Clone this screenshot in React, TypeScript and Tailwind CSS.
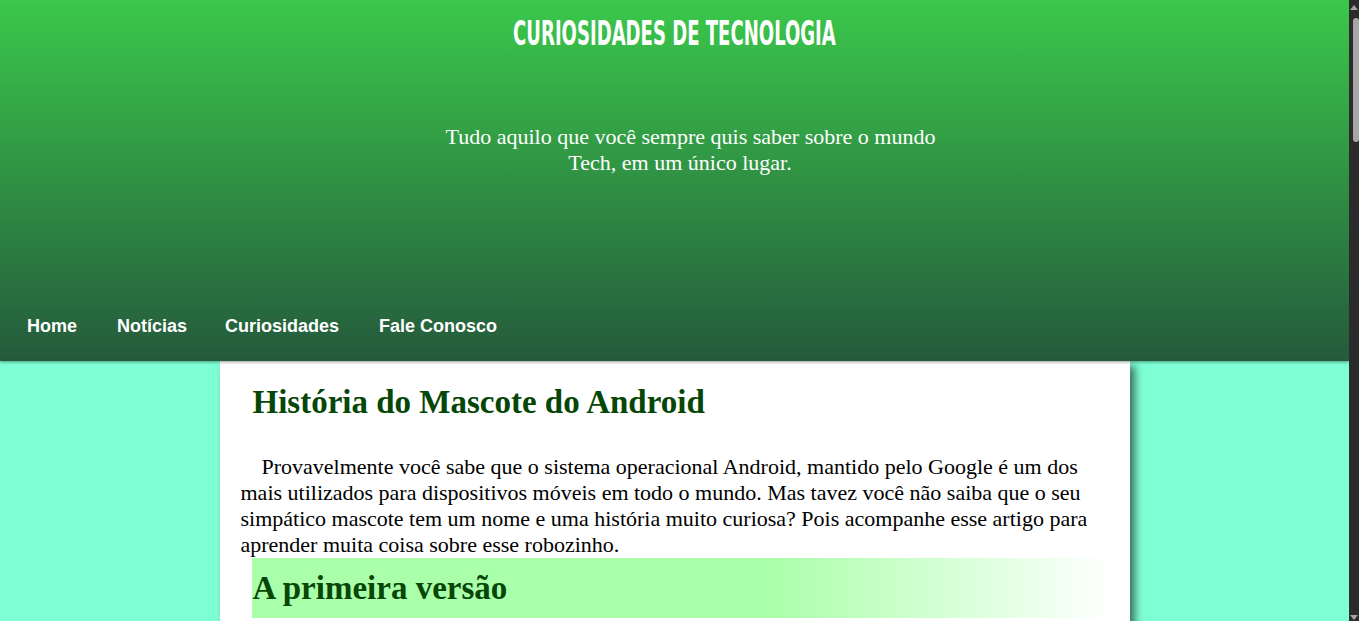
import React from "react";

function FakeScrollbar() {
  return (
    <div className="flex h-screen w-[10px] shrink-0 flex-col items-center bg-[#2b2b2b]">
      <div className="mt-[5px] h-0 w-0 border-x-[4px] border-b-[5px] border-x-transparent border-b-[#a3a3a3]" />
      <div className="mt-[8px] ml-[4px] h-[124px] w-[6px] rounded-[3px] bg-[#a6a6a6]" />
      <div className="mt-auto mb-[1px] h-0 w-0 border-x-[4px] border-t-[5px] border-x-transparent border-t-[#a3a3a3]" />
    </div>
  );
}

export default function App() {
  return (
    <div className="flex h-screen overflow-hidden bg-[#7fffd4]">
      <div className="h-screen min-w-0 flex-1 overflow-hidden">
        <header className="relative z-10 flex h-[361px] flex-col bg-[linear-gradient(to_bottom,#3bc84b,#245a3c)] shadow-[0_1px_3px_rgba(0,0,0,0.4)]">
          <h1 className="mt-[13px] text-center leading-[40px]">
            <span className="inline-block origin-center scale-x-[0.59] font-['DejaVu_Sans_Condensed','DejaVu_Sans',sans-serif] text-[34px] font-bold uppercase text-white [font-stretch:condensed]">
              Curiosidades de Tecnologia
            </span>
          </h1>
          <div className="mt-[65px] pl-[11px]">
            <p className="mx-auto max-w-[530px] text-center font-['Liberation_Serif',serif] text-[22px] leading-[26px] text-white indent-[21px]">
              Tudo aquilo que você sempre quis saber sobre o mundo Tech, em um único lugar.
            </p>
          </div>
          <nav className="mt-auto flex h-[70px] items-center pl-[27px] font-['Liberation_Sans',Arial,sans-serif] text-[18px] font-bold text-white">
            <a className="mr-[40px]">Home</a>
            <a className="mr-[38px]">Notícias</a>
            <a className="mr-[40px]">Curiosidades</a>
            <a>Fale Conosco</a>
          </nav>
        </header>
        <main className="mx-auto w-[910px] bg-white pb-10 pl-[21px] pr-[16px] pt-[23px] font-['Liberation_Serif',serif] shadow-[5px_5px_8px_rgba(0,0,0,0.55)]">
          <h2 className="ml-[12px] text-[33px] font-bold leading-[36px] text-[#064606]">
            História do Mascote do Android
          </h2>
          <p className="mt-[34px] text-[22px] leading-[26px] text-black indent-[21px]">
            Provavelmente você sabe que o sistema operacional Android, mantido pelo Google é um dos mais utilizados para dispositivos móveis em todo o mundo. Mas tavez você não saiba que o seu simpático mascote tem um nome e uma história muito curiosa? Pois acompanhe esse artigo para aprender muita coisa sobre esse robozinho.
          </p>
          <h3 className="ml-[11px] bg-[linear-gradient(to_right,#aaffaa_60%,#ffffff)] pb-[11px] pl-px pt-[12px] text-[33px] font-bold leading-[37px] text-[#064606]">
            A primeira versão
          </h3>
          <p className="mt-[16px] text-[22px] leading-[26px] text-black indent-[21px]">
            O robozinho verde foi criado em 2007 pela designer Irina Blok, que trabalhava no Google na época. A ideia era criar um personagem simples, que pudesse ser facilmente reconhecido e reproduzido por qualquer pessoa.
          </p>
        </main>
      </div>
      <FakeScrollbar />
    </div>
  );
}
